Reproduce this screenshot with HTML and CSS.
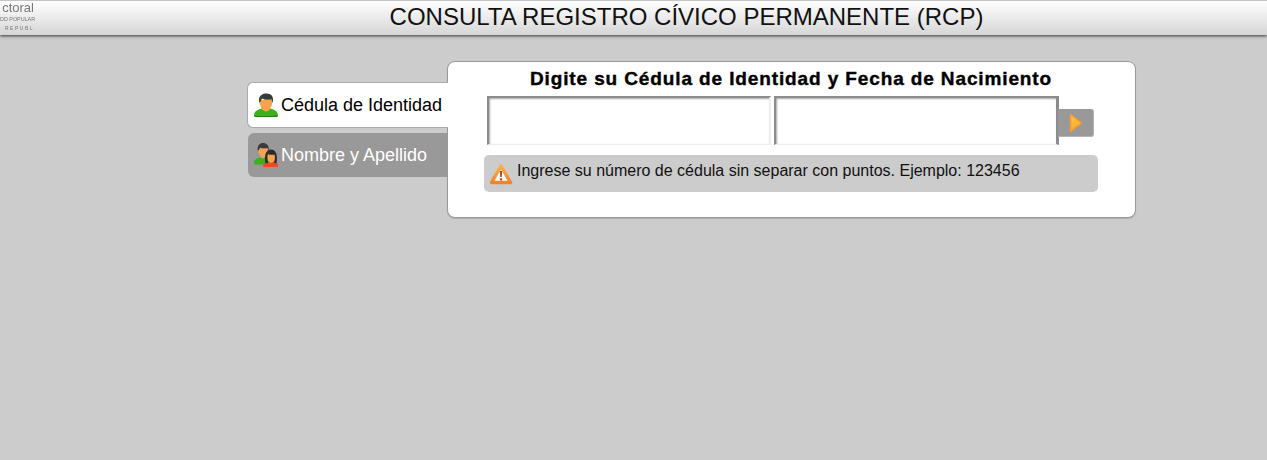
FILE: index.html
```html
<!DOCTYPE html>
<html lang="es">
	<head>
		<meta charset="UTF-8" />
		<title>Consulta RCP</title>
		<link rel="stylesheet" href="styles.css">
	</head>
	<body>
		<div class="header">
			<div class="logo">
				<div class="logo-name">ctoral</div>
				<div class="logo-sub">DD POPULAR</div>
				<div class="logo-foot">REPUBL</div>
			</div>
			<h1>CONSULTA REGISTRO CÍVICO PERMANENTE (RCP)</h1>
		</div>
		<div class="content">
			<div class="tabs">
				<div class="tab active">
					<svg class="tab-icon" viewBox="0 0 24 24">
						<path d="M0 23c0-4 2-6 8-7.500l4 2 4-2c6 1.500 8 3.500 8 7.500-1 1-23 1-24 0z" fill="#3cb01e"/>
						<path d="M0 22.500c3 .8 21 .8 24 0-.3 1-1 1.500-2 1.500H2c-1 0-1.700-.5-2-1.500z" fill="#23850f"/>
						<path d="M5.500 7c0 7 3.500 11.500 6.500 11.500S18.500 14 18.500 7z" fill="#f9a24c"/>
						<path d="M5.500 10C3.500 3 8 0.500 12.500 0.500 17 0.500 20.500 3.500 18.500 10L17.500 6.500C14 7 10 7 8 5.500 7.500 7 6.500 8.500 5.500 10z" fill="#3a3a3a"/>
					</svg>
					<span>Cédula de Identidad</span>
				</div>
				<div class="tab">
					<svg class="tab-icon" viewBox="0 0 24 24">
						<path d="M0 20c0-3 2-4.500 6-5.500l3 1 3-1 2 2-3 5H1c-.5 0-1-.5-1-1.500z" fill="#3cb01e"/>
						<path d="M4 5.500c0 5 3 9.500 5 9.500s5-4.500 5-9.500z" fill="#f9a24c"/>
						<path d="M4 8C2.500 2.500 6 0 9 0s7 2.500 5.500 8L13.500 5C11 5.500 8 5.500 6 4.500 5.500 6 5 7 4 8z" fill="#3a3a3a"/>
						<path d="M9 24c0-3 1.500-4.500 5-5.500l3 1 3-1c3.500 1 4 2.500 4 5.500z" fill="#ee4a1c"/>
						<path d="M13 11.500c0 4.500 2 8.500 4 8.500s4-4 4-8.500z" fill="#f9a24c"/>
						<path d="M11.500 20.500C10 12 12 6.500 17 6.500s7 5.500 5.500 14l-2.500-1c1.500-3 1-6 .5-8-2 .5-5 .5-6.500-.5-1 3-1 6 .5 8.500z" fill="#2c2c2c"/>
					</svg>
					<span>Nombre y Apellido</span>
				</div>
			</div>
			<div class="panel">
				<h2>Digite su Cédula de Identidad y Fecha de Nacimiento</h2>
				<div class="form-row">
					<input type="text" class="field" />
					<input type="text" class="field field-last" />
					<button class="go">
						<svg viewBox="0 0 14 20" width="14" height="20">
							<defs>
								<linearGradient id="arrow-fill" x1="0" y1="0" x2="0" y2="1">
									<stop offset="0" stop-color="#ffc445"/>
									<stop offset="1" stop-color="#fda733"/>
								</linearGradient>
							</defs>
							<path d="M1.500 1.500 12.500 10 1.500 18.500z" fill="url(#arrow-fill)" stroke="#fb9a2c" stroke-width="1.500" stroke-linejoin="round"/>
						</svg>
					</button>
				</div>
				<div class="notice">
					<svg class="notice-icon" viewBox="0 0 24 24">
						<defs>
							<linearGradient id="warn-edge" x1="0" y1="0" x2="0" y2="1">
								<stop offset="0" stop-color="#fbb04a"/>
								<stop offset="1" stop-color="#f5812a"/>
							</linearGradient>
						</defs>
						<path d="M12 4 21.500 20.500H2.500z" fill="#fff" stroke="url(#warn-edge)" stroke-width="3.500" stroke-linejoin="round"/>
						<path d="M10.800 9h2.400l-.4 6h-1.600zM10.900 16.300h2.200v2.200h-2.200z" fill="#a4502c"/>
					</svg>
					<span>Ingrese su número de cédula sin separar con puntos. Ejemplo: 123456</span>
				</div>
			</div>
		</div>
	</body>
</html>
```

FILE: styles.css
```css
html,
body {
	height: 100%;
}
body {
	margin: 0;
	font-family: "Liberation Sans", Arial, sans-serif;
	background-color: #cccccc;
	color: #000;
	overflow: hidden;
}
.header {
	display: flex;
	align-items: center;
	height: 34px;
	background: linear-gradient(to bottom, #ffffff, #d6d6d6);
	border-top: 1px solid #c4c4c4;
	box-shadow: 0 1px 3px rgba(0, 0, 0, 0.75);
}
.header h1 {
	flex: 1;
	margin: 0 0 0 72px;
	padding-bottom: 3px;
	font-size: 24px;
	font-weight: normal;
	text-align: center;
	color: #111;
}
.logo {
	width: 34px;
	height: 34px;
	color: #777777;
	text-align: right;
	white-space: nowrap;
	filter: blur(0.5px);
}
.logo-name {
	font-size: 13px;
	line-height: 14px;
}
.logo-sub {
	font-size: 5.4px;
	line-height: 9px;
}
.logo-foot {
	font-size: 5px;
	line-height: 9px;
	letter-spacing: 1.5px;
}
.content {
	display: flex;
	align-items: flex-start;
	padding: 26px 0 0 247px;
}
.tabs {
	width: 201px;
	padding-top: 21px;
	flex-shrink: 0;
	position: relative;
	z-index: 1;
}
.tab {
	display: flex;
	align-items: center;
	height: 44px;
	margin: 0 0 5px 1px;
	padding-left: 6px;
	background-color: #999999;
	border-radius: 6px 0 0 6px;
	font-size: 18px;
	color: #fff;
}
.tab span {
	padding-top: 1px;
	white-space: nowrap;
}
.tab.active {
	margin-left: 0;
	background-color: #fff;
	border: 1px solid #aaa;
	border-right: none;
	color: #000;
}
.tab-icon {
	width: 24px;
	height: 24px;
	margin-right: 3px;
}
.panel {
	box-sizing: border-box;
	width: 689px;
	height: 157px;
	margin-left: -1px;
	padding: 7px 37px 0 36px;
	background-color: #fff;
	border: 1px solid #999;
	border-radius: 8px;
	box-shadow: 0 1px 1px rgba(0, 0, 0, 0.15);
}
.panel h2 {
	margin: 0;
	font-size: 19px;
	line-height: 20px;
	letter-spacing: 0.88px;
	text-align: center;
	-webkit-text-stroke: 0.4px #000;
}
.form-row {
	display: flex;
	align-items: flex-start;
	gap: 3px;
	margin: 7px 0 10px 3px;
}
.field {
	box-sizing: border-box;
	width: 284px;
	height: 49px;
	padding: 0;
	border-style: solid;
	border-width: 2px 2px 1px 2px;
	border-color: #8c8c8c #eeeeee #eeeeee #8c8c8c;
	background-color: #fff;
	box-shadow: inset 1px 1px 2px rgba(0, 0, 0, 0.35);
}
.field-last {
	width: 285px;
	border-width: 2px 3px 1px 2px;
	border-right-color: #8c8c8c;
}
.go {
	width: 36px;
	height: 28px;
	margin: 13px 0 0 -4px;
	padding: 0 0 0 1px;
	display: flex;
	align-items: center;
	justify-content: center;
	border: none;
	border-right: 1px solid #b5b5b5;
	border-bottom: 1px solid #b5b5b5;
	border-radius: 0 3px 3px 0;
	background-color: #999999;
}
.notice {
	display: flex;
	align-items: flex-start;
	height: 37px;
	padding-left: 5px;
	background-color: #cccccc;
	border-radius: 5px;
	font-size: 16px;
	color: #111;
}
.notice span {
	padding-top: 7px;
}
.notice-icon {
	width: 24px;
	height: 24px;
	margin: 7px 4px 0 0;
}
```
